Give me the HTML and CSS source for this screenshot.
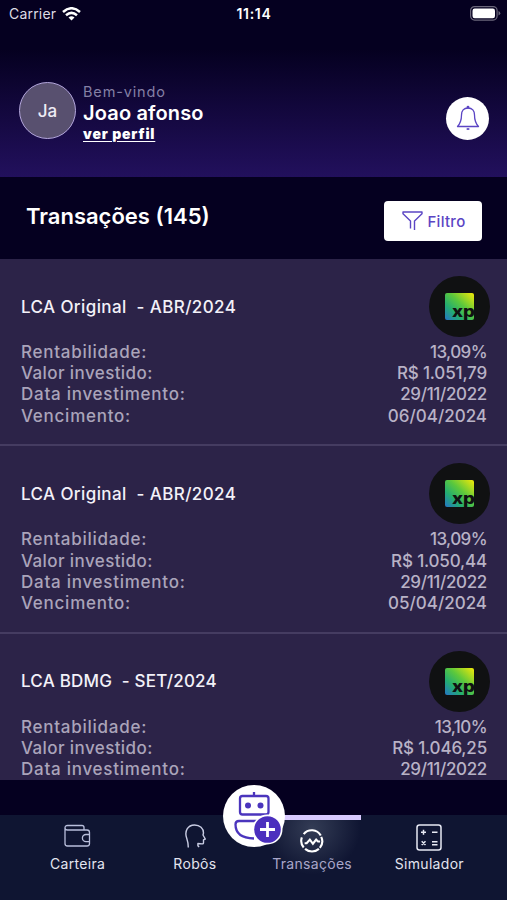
FILE: index.html
```html
<!DOCTYPE html>
<html lang="pt-BR">
<head>
<meta charset="utf-8">
<title>Transações</title>
<link rel="stylesheet" href="styles.css">
</head>
<body>
<svg class="defs" width="0" height="0" aria-hidden="true">
  <defs>
    <linearGradient id="xpg" x1="0" y1="1" x2="1" y2="0">
      <stop offset="0" stop-color="#2475c8"/><stop offset=".3" stop-color="#24ad70"/>
      <stop offset=".58" stop-color="#5cc83c"/><stop offset="1" stop-color="#f2e908"/>
    </linearGradient>
    <symbol id="xp" viewBox="0 0 61 61">
      <circle cx="30.5" cy="30.5" r="30.5" fill="#101112"/>
      <rect x="16" y="17" width="29" height="27" rx="2" fill="url(#xpg)"/>
      <text x="23" y="40.500" textLength="23" lengthAdjust="spacingAndGlyphs" class="xp-text">xp</text>
    </symbol>
  </defs>
</svg>
<header class="header">
  <div class="status">
    <span class="carrier">Carrier
      <svg width="19" height="14" viewBox="0 0 19 14" fill="none" stroke="#fff" stroke-width="2.5"><path d="M1 5Q9.500-2.500 18 5M4 8.300Q9.500 3.500 15 8.300"/><path d="M6.500 10.500Q9.500 8 12.500 10.500L9.500 13.600Z" fill="#fff" stroke="none"/></svg>
    </span>
    <span class="time">11:14</span>
    <svg class="battery" width="31" height="15" viewBox="0 0 31 15"><rect x=".6" y=".6" width="26.500" height="13.500" rx="4" fill="none" stroke="#6b677b" stroke-width="1.200"/><rect x="2.500" y="2.500" width="22.500" height="9.700" rx="2.200" fill="#fff"/><path d="M28.500 5v4.500q1.800-.8 1.800-2.250T28.500 5z" fill="#6b677b"/></svg>
  </div>
  <div class="profile">
    <div class="avatar">Ja</div>
    <div class="who">
      <span class="hello">Bem-vindo</span>
      <span class="name">Joao afonso</span>
      <a class="link">ver perfil</a>
    </div>
    <div class="bell">
      <svg width="26" height="26" viewBox="0 0 24 26" fill="none" stroke="#5b45c4" stroke-width="1.300" stroke-linejoin="round"><path d="M12 3c-4.300 0-6.500 3-6.500 7 0 6-1.200 8.500-4 11.500h21C19.700 18.500 18.500 16 18.500 10c0-4-2.200-7-6.500-7z"/><path d="M10.800 23.500q1.200 1.300 2.400 0" stroke-width="1.800"/><circle cx="12" cy="2.200" r=".8"/></svg>
    </div>
  </div>
</header>
<section class="titlebar">
  <h1>Transações (145)</h1>
  <button class="filter">
    <svg width="21" height="20" viewBox="0 0 21 20" fill="none" stroke="#5b45c4" stroke-width="1.400" stroke-linejoin="round"><path d="M8.500 17.500V10L1 2.700V1h19v1.700L12.500 10v9"/></svg>
    <span>Filtro</span>
  </button>
</section>
<main class="list">
  <article class="card">
    <div class="head"><h2>LCA Original&nbsp; - ABR/2024</h2><svg class="logo"><use href="#xp"/></svg></div>
    <dl>
      <dt>Rentabilidade:</dt><dd class="rate">13,09%</dd>
      <dt class="amount-label">Valor investido:</dt><dd class="amount">R$ 1.051,79</dd>
      <dt>Data investimento:</dt><dd class="date">29/11/2022</dd>
      <dt>Vencimento:</dt><dd>06/04/2024</dd>
    </dl>
  </article>
  <article class="card">
    <div class="head"><h2>LCA Original&nbsp; - ABR/2024</h2><svg class="logo"><use href="#xp"/></svg></div>
    <dl>
      <dt>Rentabilidade:</dt><dd class="rate">13,09%</dd>
      <dt class="amount-label">Valor investido:</dt><dd class="amount">R$ 1.050,44</dd>
      <dt>Data investimento:</dt><dd class="date">29/11/2022</dd>
      <dt>Vencimento:</dt><dd>05/04/2024</dd>
    </dl>
  </article>
  <article class="card">
    <div class="head"><h2 class="tight">LCA BDMG&nbsp; - SET/2024</h2><svg class="logo"><use href="#xp"/></svg></div>
    <dl>
      <dt>Rentabilidade:</dt><dd class="rate">13,10%</dd>
      <dt class="amount-label">Valor investido:</dt><dd class="amount">R$ 1.046,25</dd>
      <dt>Data investimento:</dt><dd class="date">29/11/2022</dd>
    </dl>
  </article>
</main>
<nav class="nav">
  <div class="tab">
    <svg width="27" height="24" viewBox="0 0 27 24" fill="none" stroke="#b9bfdc" stroke-width="1.300" stroke-linejoin="round"><path d="M20 5.500V3.500Q20 1.500 18 1.500H3.500Q1 1.500 1 4v15.500Q1 22 3.500 22H23q2.500 0 2.500-2.500V8.500Q25.500 6 23 6H3.500Q1.200 6 1 4M25.500 10.500H22a3.600 3.600 0 0 0 0 7.200h3.500"/></svg>
    <span>Carteira</span>
  </div>
  <div class="tab">
    <svg width="22" height="24" viewBox="0 0 22 24" fill="none" stroke="#c9cde4" stroke-width="1.400" stroke-linejoin="round"><path d="M4.300 23.500C4.300 20 4 18 2.800 14.500 0 7 4 1 10.500 1c5.500 0 9 3.500 9 8l-.5 2 2.300 4-1.800.8v3q0 1.200-1.400 1.100l-4.200-.4v2.200l1.200 1.300"/></svg>
    <span>Robôs</span>
  </div>
  <div class="tab active">
    <svg width="26" height="26" viewBox="0 0 26 26" fill="none" stroke="#fff" stroke-width="2.300"><path d="M4 5.500A11.300 11.300 0 0 1 22.500 7M23 8.500A11.300 11.300 0 0 1 21.500 20.500M2 9A11.300 11.300 0 0 0 4 20M5.500 21.500A11.300 11.300 0 0 0 20.500 21.500"/><path d="M5 15.500h2.200l3.500-4 3.300 4.500 3.500-4.500 2 2h2.300"/></svg>
    <span>Transações</span>
  </div>
  <div class="tab">
    <svg width="26" height="27" viewBox="0 0 26 27" fill="none" stroke="#e7e9f4" stroke-width="1.500"><rect x="1" y="1" width="24" height="25" rx="2.500"/><path d="M5 8.300h5M7.500 5.800v5M16 8.300h5.500M5.700 17.200l3.800 3.800M9.500 17.200L5.700 21M16 17.800h5.500M16 20.800h5.500"/></svg>
    <span>Simulador</span>
  </div>
  <div class="robot">
    <svg width="62" height="62" viewBox="0 0 62 62" fill="none" stroke="#4b35bd" stroke-width="2.300"><circle cx="31" cy="31" r="31" fill="#fff" stroke="none"/><path d="M31 7v5"/><rect x="17" y="11" width="28.500" height="18.500" rx="2.500"/><circle cx="25" cy="20.500" r="3" fill="#4b35bd" stroke="none"/><circle cx="37.500" cy="20.500" r="3" fill="#4b35bd" stroke="none"/><path d="M31 36H16q-3.500 0-3.500 3.500Q12.500 53 31 53.500M30 36h7"/><circle cx="44.500" cy="44.500" r="15" fill="#fff" stroke="none"/><circle cx="44.500" cy="44.500" r="13.300" fill="#4b2fbe" stroke="none"/><path d="M37 44.500h15M44.500 37v15" stroke="#fff" stroke-width="2.800"/></svg>
  </div>
</nav>
</body>
</html>
```
FILE: styles.css
```css
* { box-sizing: border-box; }
body { margin: 0; width: 507px; height: 900px; overflow: hidden; display: flex; flex-direction: column; background: #050020; color: #fff; font-family: Inter, sans-serif; }
h1, h2, dl, dd { margin: 0; }
.defs { position: absolute; }
.header { height: 177px; flex: none; background: linear-gradient(#050020 0, #050020 28%, #22105d 100%); }
.status { height: 27px; display: grid; grid-template-columns: 1fr auto 1fr; align-items: center; padding: 0 6px 0 9px; }
.carrier { display: flex; align-items: center; gap: 6px; font-size: 14px; letter-spacing: .2px; color: #dddce4; }
.time { font-size: 14px; font-weight: 600; letter-spacing: .7px; margin-right: 2px; }
.battery { justify-self: end; }
.profile { display: flex; align-items: center; padding: 52px 18px 0 19px; }
.avatar { width: 57px; height: 57px; border-radius: 50%; border: 1.5px solid #b3a6dc; background: #58506f; display: flex; align-items: center; justify-content: center; font-size: 17px; font-weight: 500; color: #eeecf5; }
.who { display: flex; flex-direction: column; align-items: flex-start; margin-left: 7px; flex: 1; padding-top: 3px; }
.hello { font-size: 14.5px; line-height: 19px; letter-spacing: .85px; color: #8580a5; }
.name { font-size: 20px; line-height: 24px; font-weight: 600; letter-spacing: .15px; }
.link { font-size: 14px; line-height: 17px; font-weight: 900; letter-spacing: .8px; text-decoration: underline; text-decoration-thickness: 1px; text-underline-offset: 2px; }
.bell { width: 43px; height: 43px; margin-top: 15px; border-radius: 50%; background: #fff; display: flex; align-items: center; justify-content: center; }
.titlebar { height: 82px; flex: none; display: flex; justify-content: space-between; padding: 24px 25px 0 26px; background: #050020; }
h1 { font-size: 22px; line-height: 30px; font-weight: 600; }
.filter { width: 98px; height: 40px; border: 0; border-radius: 4px; background: #fff; color: #5b45c4; display: flex; align-items: center; justify-content: center; gap: 4px; padding: 0 0 0 2px; font: 500 15px Inter, sans-serif; letter-spacing: .3px; }
.list { height: 521px; flex: none; overflow: hidden; background: #2c2348; }
.card { height: 187.400px; border-bottom: 2px solid #453c61; padding: 17px 17px 0 21px; }
.head { display: flex; align-items: center; justify-content: space-between; height: 61px; }
.logo { width: 61px; height: 61px; }
.xp-text { font: 800 16px Inter, sans-serif; fill: #101112; }
h2 { font-size: 17px; font-weight: 500; letter-spacing: .4px; color: #f3f1f8; }
.tight { letter-spacing: .22px; }
dl { display: grid; grid-template-columns: 1fr auto; grid-auto-rows: 21.200px; align-items: center; margin-top: 4.400px; padding-right: 3px; font-size: 17px; color: #aaa4ba; font-weight: 450; }
dt { letter-spacing: .74px; }
.amount-label { letter-spacing: .4px; }
dd { text-align: right; color: #b8b2c6; }
.rate { letter-spacing: -.6px; }
.amount { letter-spacing: -.17px; }
.date { letter-spacing: -.35px; }
.nav { position: relative; height: 85px; flex: none; margin-top: 35px; background: #0f1532; display: grid; grid-template-columns: repeat(4, 1fr); padding: 0 19px; }
.tab { display: flex; flex-direction: column; align-items: center; height: 60px; padding-top: 9px; font-size: 14px; letter-spacing: .3px; color: #e3e4ef; }
.tab span { margin-top: auto; line-height: 22px; }
.active { width: 98px; justify-self: center; border-top: 5px solid #d9caff; background: radial-gradient(ellipse at 50% 15%, #333c55 0, #20284300 70%); color: #a9a6c9; }
.robot { position: absolute; left: 223px; top: -30px; width: 62px; height: 62px; }
```
